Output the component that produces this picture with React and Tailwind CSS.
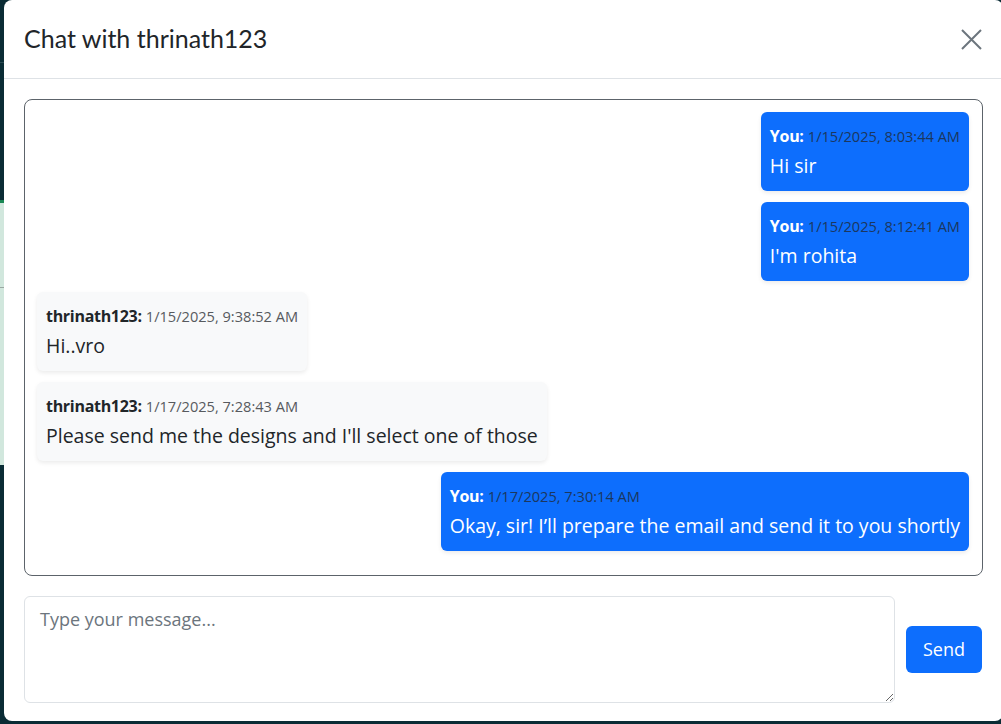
import React, { useState } from 'react';

const messages = [
    { id: 1, sender: 'You', time: '1/15/2025, 8:03:44 AM', text: 'Hi sir', mine: true },
    { id: 2, sender: 'You', time: '1/15/2025, 8:12:41 AM', text: "I'm rohita", mine: true },
    { id: 3, sender: 'thrinath123', time: '1/15/2025, 9:38:52 AM', text: 'Hi..vro', mine: false },
    { id: 4, sender: 'thrinath123', time: '1/17/2025, 7:28:43 AM', text: "Please send me the designs and I'll select one of those", mine: false },
    { id: 5, sender: 'You', time: '1/17/2025, 7:30:14 AM', text: 'Okay, sir! I\u2019ll prepare the email and send it to you shortly', mine: true },
];

const Bubble = ({ msg }) => (
    <div className={`flex ${msg.mine ? 'justify-end' : 'justify-start'} mb-[11px]`}>
        <div
            className={`rounded-md px-[9px] py-3 shadow-[0_2px_4px_rgba(0,0,0,0.08)] ${msg.mine ? 'bg-[#0d6efd]' : 'bg-[#f8f9fa]'
                }`}
        >
            <div className="h-[24px] leading-[24px] whitespace-nowrap">
                <strong className={`text-[16px] tracking-[-0.3px] ${msg.mine ? 'text-white' : 'text-[#212529]'}`}>{msg.sender}:</strong>{' '}
                <span className={`text-[14.6px] ${msg.mine ? 'text-[#1c375e]' : 'text-[#575a5e]'}`}>{msg.time}</span>
            </div>
            <p className={`mt-1 text-[19.5px] leading-[27px] whitespace-nowrap ${msg.mine ? 'text-white' : 'text-[#212529]'}`}>
                {msg.text}
            </p>
        </div>
    </div>
);

const App = () => {
    const [draft, setDraft] = useState('');

    return (
        <div className="flex w-[1001px] h-[724px] bg-[#0a2c35] overflow-hidden font-['Open_Sans',sans-serif]">
            {/* sliver of the page behind the modal */}
            <div className="flex flex-col w-[4px] shrink-0">
                <div className="h-[62px]" />
                <div className="h-px bg-[#2b4a52]" />
                <div className="h-[137px]" />
                <div className="h-[3px] bg-[#198754]" />
                <div className="h-[84px] bg-[#d1e7dd]" />
                <div className="h-px bg-[#9aa8a2]" />
                <div className="h-[177px] bg-[#d1e7dd]" />
            </div>

            <div className="flex flex-col w-[999px] h-[721px] bg-white rounded-lg shrink-0">
                {/* Header */}
                <div className="flex items-center justify-between h-[79px] pl-5 pr-[21px] border-b border-[#dee2e6] shrink-0">
                    <h5 className="text-[25px] text-[#212529] leading-none pb-[2px] font-['Lato',sans-serif]">Chat with thrinath123</h5>
                    <button className="w-[24px] h-[24px] flex items-center justify-end">
                        <svg width="21" height="21" viewBox="0 0 21 21" fill="none" stroke="#6c757d" strokeWidth="2">
                            <path d="M1 1L20 20M20 1L1 20" />
                        </svg>
                    </button>
                </div>

                {/* Body */}
                <div className="flex flex-col px-5 pt-5 pb-[18px] flex-1">
                    <div className="h-[477px] border border-[#5c636a] rounded-lg pl-3 pr-[13px] py-3 overflow-y-auto">
                        {messages.map((msg) => (
                            <Bubble key={msg.id} msg={msg} />
                        ))}
                    </div>

                    <div className="flex items-center gap-[11px] mt-5">
                        <textarea
                            className="w-[871px] h-[107px] border border-[#dee2e6] rounded-md px-[15px] py-[9px] text-[18px] text-[#212529] placeholder:text-[#6c757d] outline-none"
                            placeholder="Type your message..."
                            value={draft}
                            onChange={(e) => setDraft(e.target.value)}
                        />
                        <button className="w-[76px] h-[47px] bg-[#0d6efd] text-white rounded-md text-[18px]">
                            Send
                        </button>
                    </div>
                </div>
            </div>
        </div>
    );
};

export default App;
